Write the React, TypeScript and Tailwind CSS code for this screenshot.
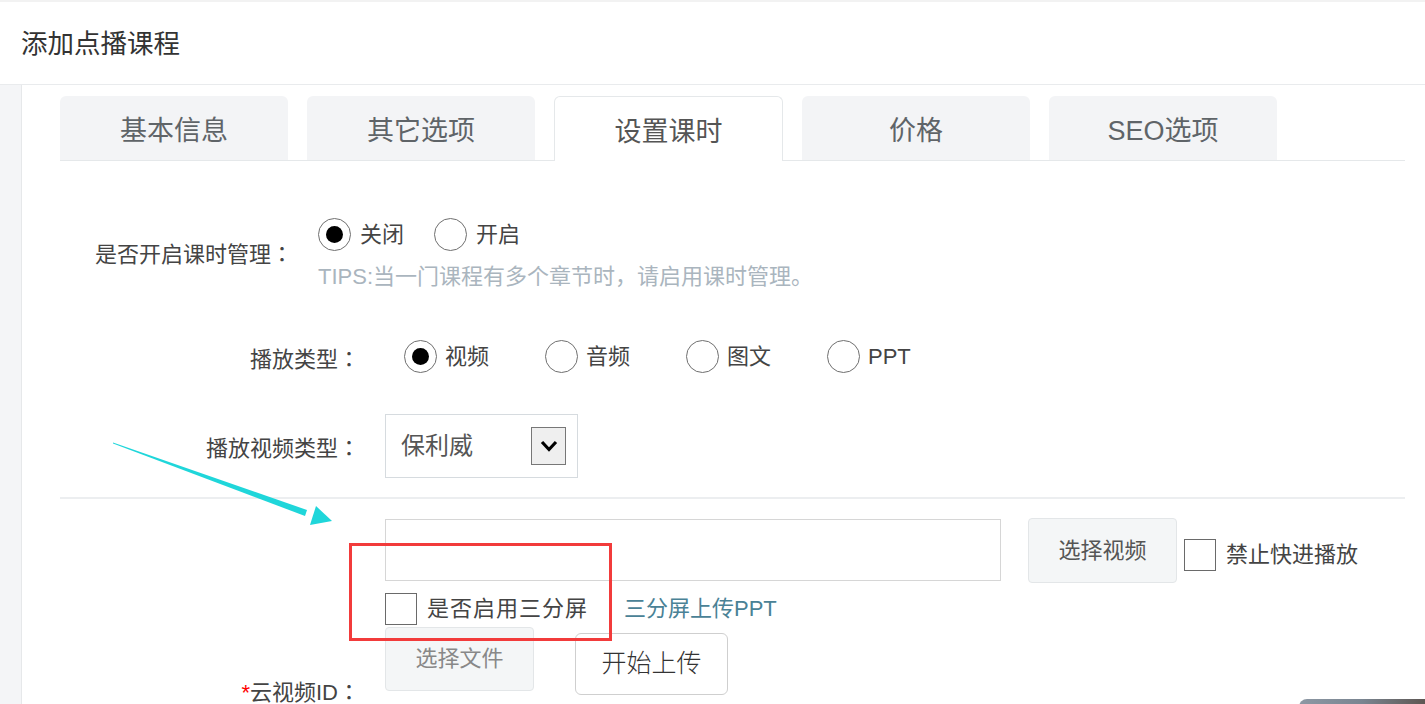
import React from "react";

const FONT = { fontFamily: '"Liberation Sans", "Noto Sans CJK SC", sans-serif' };
const TC = { fontFamily: '"Noto Sans CJK TC", sans-serif' };

function Colon() {
  return <span style={TC}>：</span>;
}

function Radio({ checked }: { checked?: boolean }) {
  return (
    <span className="flex h-[33px] w-[33px] shrink-0 items-center justify-center rounded-full border border-[#6f6f6f] bg-white">
      {checked && <span className="h-[17px] w-[17px] rounded-full bg-black" />}
    </span>
  );
}

function Check() {
  return <span className="block h-[32px] w-[32px] shrink-0 border border-[#6a6a6a] bg-white" />;
}

const tabs = ["基本信息", "其它选项", "设置课时", "价格", "SEO选项"];

export default function App() {
  return (
    <div className="relative h-[704px] w-[1425px] overflow-hidden bg-white text-[#444]" style={FONT}>
      <div className="h-[2px] bg-[#f2f2f2]" />
      <header className="flex h-[83px] items-center border-b border-[#e9ebed] pl-[21px] pt-[3px] text-[26.5px] text-[#333]">
        添加点播课程
      </header>
      <div className="flex h-[619px]">
        <aside className="w-[22px] shrink-0 border-r border-[#e6e8ea] bg-[#f4f5f7]" />
        <main className="flex-1 pl-[38px] pr-[20px]">
          {/* tabs */}
          <div className="mt-[11px] flex gap-[19px] border-b border-[#e5e8ea]">
            {tabs.map((t, i) =>
              i === 2 ? (
                <div
                  key={t}
                  className="-mb-px flex h-[65px] w-[229px] items-center justify-center rounded-t-[6px] border border-b-0 border-[#e5e8ea] bg-white pt-[7px] text-[27px] text-[#555]"
                >
                  {t}
                </div>
              ) : (
                <div
                  key={t}
                  className="flex h-[64px] w-[228px] items-center justify-center rounded-t-[6px] bg-[#f3f4f6] pt-[7px] text-[27px] text-[#5f6468]"
                >
                  {t}
                </div>
              )
            )}
          </div>

          {/* row 1 */}
          <div className="mt-[57px] flex items-center">
            <div className="mb-[6px] h-[30px] w-[233px] text-right text-[22px] leading-[30px]">
              是否开启课时管理<Colon />
            </div>
            <div className="ml-[25px] flex flex-col">
              <div className="flex h-[33px] items-center text-[22px]">
                <div className="flex w-[116px] items-center gap-[9px]">
                  <Radio checked />
                  <span>关闭</span>
                </div>
                <div className="flex items-center gap-[9px]">
                  <Radio />
                  <span>开启</span>
                </div>
              </div>
              <div className="mt-[11px] text-[22px] leading-[30px] text-[#aab5be]">
                TIPS:当一门课程有多个章节时，请启用课时管理。
              </div>
            </div>
          </div>

          {/* row 2 */}
          <div className="mt-[48px] flex items-center">
            <div className="h-[30px] w-[300px] text-right text-[22px] leading-[30px]">
              播放类型<Colon />
            </div>
            <div className="ml-[44px] flex h-[33px] items-center text-[22px]">
              {["视频", "音频", "图文", "PPT"].map((l, i) => (
                <div key={l} className="flex w-[141px] items-center gap-[8px]">
                  <Radio checked={i === 0} />
                  <span>{l}</span>
                </div>
              ))}
            </div>
          </div>

          {/* row 3 */}
          <div className="mt-[41px] flex items-center">
            <div className="h-[30px] w-[300px] text-right text-[22px] leading-[30px]">
              播放视频类型<Colon />
            </div>
            <div className="ml-[25px] flex h-[64px] w-[193px] items-center justify-between border border-[#d6dbdf] pl-[15px] pr-[11px] text-[24px] text-[#555]">
              <span>保利威</span>
              <span className="flex h-[38px] w-[35px] items-center justify-center border border-[#777] bg-[#efefef]">
                <svg width="18" height="12" viewBox="0 0 18 12">
                  <polyline points="2,2 9,9.5 16,2" fill="none" stroke="#000" strokeWidth="3.2" />
                </svg>
              </span>
            </div>
          </div>

          <div className="mt-[19px] h-[2px] bg-[#eceef0]" />

          {/* video block */}
          <div className="mt-[19px] flex">
            <div className="w-[300px] pt-[157px]">
              <div className="h-[30px] text-right text-[22px] leading-[30px]">
                <span className="text-[#f00]">*</span>云视频ID<Colon />
              </div>
            </div>
            <div className="ml-[25px] flex flex-col">
              <div className="flex items-start">
                <div className="mt-[1px] h-[62px] w-[616px] border border-[#d6d6d6]" />
                <button className="ml-[27px] flex h-[65px] w-[149px] items-center justify-center rounded-[4px] border border-[#e3e6e8] bg-[#f4f6f7] text-[22px] text-[#555]">
                  选择视频
                </button>
                <div className="ml-[7px] mt-[20px] flex items-center gap-[10px] text-[22px]">
                  <Check />
                  <span>禁止快进播放</span>
                </div>
              </div>
              <div className="mt-[9px] flex items-center text-[22px]">
                <Check />
                <span className="ml-[10px] tracking-[1px]">是否启用三分屏</span>
                <span className="ml-[36px] text-[#4a8296]">三分屏上传PPT</span>
              </div>
              <div className="mt-[2px] flex items-start">
                <button className="flex h-[64px] w-[149px] items-start justify-center rounded-[4px] border border-[#e3e6e8] bg-[#f4f6f7] pt-[14px] text-[22px] text-[#888]">
                  选择文件
                </button>
                <button className="ml-[41px] mt-[6px] flex h-[62px] w-[153px] items-center justify-center rounded-[6px] border border-[#cfcfcf] bg-white text-[25px] font-light text-[#333]">
                  开始上传
                </button>
              </div>
            </div>
          </div>
        </main>
      </div>

      {/* annotation: arrow */}
      <svg className="pointer-events-none absolute left-0 top-0" width="1425" height="704">
        <polygon points="113,442.5 307,510 305,516 113,443.5" fill="#1fd6da" />
        <polygon points="332,521 316,506 310,525" fill="#1fd6da" />
      </svg>

      {/* annotation: red box */}
      <div className="pointer-events-none absolute left-[349px] top-[543px] h-[98px] w-[263px] border-[3px] border-[#f23b3b]" />

      {/* bottom-right image fragment */}
      <div className="absolute left-[1299px] top-[699px] h-[10px] w-[126px] rounded-tl-[8px] bg-gradient-to-r from-[#8d98a4] via-[#7a8591] to-[#5e5753]" />
    </div>
  );
}
